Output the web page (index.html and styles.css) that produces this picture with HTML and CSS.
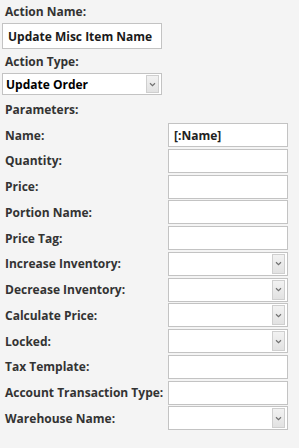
FILE: index.html
```html
<!DOCTYPE html>
<html>
<head>
<meta charset="utf-8">
<link rel="stylesheet" href="styles.css">
</head>
<body>
<div class="panel">
  <div class="label top">Action Name:</div>
  <div class="textbox wide"><span>Update Misc Item Name</span></div>
  <div class="label top type">Action Type:</div>
  <div class="combo wide"><span>Update Order</span><div class="btn"><svg viewBox="0 0 8 6" width="7" height="5"><path d="M1 1.5 L4 4.5 L7 1.5" fill="none" stroke="#707070" stroke-width="1.4"/></svg></div></div>
  <div class="label top params">Parameters:</div>
  <div class="grid">
    <div class="label">Name:</div>
    <div class="textbox"><span>[:Name]</span></div>
    <div class="label">Quantity:</div>
    <div class="textbox"></div>
    <div class="label">Price:</div>
    <div class="textbox"></div>
    <div class="label">Portion Name:</div>
    <div class="textbox"></div>
    <div class="label">Price Tag:</div>
    <div class="textbox"></div>
    <div class="label">Increase Inventory:</div>
    <div class="combo"><span></span><div class="btn"><svg viewBox="0 0 8 6" width="7" height="5"><path d="M1 1.5 L4 4.5 L7 1.5" fill="none" stroke="#707070" stroke-width="1.4"/></svg></div></div>
    <div class="label">Decrease Inventory:</div>
    <div class="combo"><span></span><div class="btn"><svg viewBox="0 0 8 6" width="7" height="5"><path d="M1 1.5 L4 4.5 L7 1.5" fill="none" stroke="#707070" stroke-width="1.4"/></svg></div></div>
    <div class="label">Calculate Price:</div>
    <div class="combo"><span></span><div class="btn"><svg viewBox="0 0 8 6" width="7" height="5"><path d="M1 1.5 L4 4.5 L7 1.5" fill="none" stroke="#707070" stroke-width="1.4"/></svg></div></div>
    <div class="label">Locked:</div>
    <div class="combo"><span></span><div class="btn"><svg viewBox="0 0 8 6" width="7" height="5"><path d="M1 1.5 L4 4.5 L7 1.5" fill="none" stroke="#707070" stroke-width="1.4"/></svg></div></div>
    <div class="label">Tax Template:</div>
    <div class="textbox"></div>
    <div class="label">Account Transaction Type:</div>
    <div class="textbox"></div>
    <div class="label">Warehouse Name:</div>
    <div class="combo"><span></span><div class="btn"><svg viewBox="0 0 8 6" width="7" height="5"><path d="M1 1.5 L4 4.5 L7 1.5" fill="none" stroke="#707070" stroke-width="1.4"/></svg></div></div>
  </div>
</div>
</body>
</html>
```

FILE: styles.css
```css
html, body {
  margin: 0;
  padding: 0;
  background: #f4f4f4;
}
.panel {
  padding: 0 0 0 2px;
  font-family: "Open Sans", "Noto Sans", sans-serif;
  font-weight: 700;
  font-size: 12px;
  color: #333;
  width: 286px;
}
.label {
  display: flex;
  align-items: center;
  padding-left: 3px;
  white-space: nowrap;
}
.label.top {
  height: 23px;
}
.label.type {
  height: 24px;
}
.label.params {
  height: 28px;
}
.textbox, .combo {
  box-sizing: border-box;
  border: 1px solid #c3c3c3;
  background: #fff;
  display: flex;
  align-items: center;
  color: #222;
}
.textbox {
  height: 24px;
}
.textbox.wide {
  width: 160px;
  height: 26px;
  color: #1a1a1a;
}
.textbox span {
  padding-left: 5px;
}
.combo {
  height: 24px;
  padding: 1px;
}
.combo span {
  flex: 1;
  padding-left: 2px;
}
.combo.wide {
  width: 160px;
  height: 22px;
  color: #000;
}
.btn {
  width: 11px;
  align-self: stretch;
  border: 1px solid #cfcfcf;
  background: linear-gradient(#f2f2f2, #e2e2e2);
  display: flex;
  align-items: center;
  justify-content: center;
  margin-right: 1px;
}
.grid {
  display: grid;
  grid-template-columns: 1fr 120px;
  column-gap: 4px;
  row-gap: 1.75px;
  grid-auto-rows: 24px;
}
```
